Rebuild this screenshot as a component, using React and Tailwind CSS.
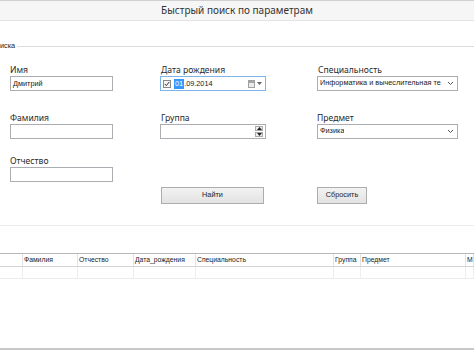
import React from 'react';

const ui = { fontFamily: '"Noto Sans", "Open Sans", sans-serif' };
const small = { fontFamily: '"Liberation Sans", Arial, sans-serif' };

function Label({ children, className = '' }) {
  return (
    <div className={`h-[12px] text-[8.6px] leading-[12px] text-[#2a2a2a] ${className}`} style={ui}>
      {children}
    </div>
  );
}

function TextBox({ value = '', w = 'w-[103px]' }) {
  return (
    <div
      className={`${w} h-[15px] border border-[#abadb3] bg-white px-[2px] text-[7.3px] leading-[13px] text-[#1a1a1a]`}
      style={small}
    >
      {value}
    </div>
  );
}

function Chevron() {
  return (
    <svg width="7" height="5" viewBox="0 0 7 5" className="shrink-0">
      <path d="M1 1l2.5 2.5L6 1" fill="none" stroke="#555" strokeWidth="1" />
    </svg>
  );
}

function ComboBox({ value }) {
  return (
    <div
      className="flex h-[15px] w-[141px] items-center justify-between border border-[#abadb3] bg-white pl-[2px] pr-[3px] text-[7.3px] text-[#1a1a1a]"
      style={small}
    >
      <span className="overflow-hidden whitespace-nowrap">{value}</span>
      <Chevron />
    </div>
  );
}

function DatePicker() {
  return (
    <div
      className="flex h-[15px] w-[106px] items-center border border-[#7eb4ea] bg-white pl-[2px] pr-[3px] text-[7.3px] text-[#1a1a1a]"
      style={small}
    >
      <div className="flex h-[8px] w-[8px] items-center justify-center border border-[#8a8a8a] bg-[#f4f4f4]">
        <svg width="6" height="6" viewBox="0 0 6 6">
          <path d="M0.8 3l1.5 1.6L5.2 1" fill="none" stroke="#333" strokeWidth="1" />
        </svg>
      </div>
      <span className="ml-[3px] bg-[#3399ff] px-[1px] leading-[10px] text-white">01</span>
      <span className="leading-[10px]">.09.2014</span>
      <div className="ml-auto flex items-center gap-[2px]">
        <div className="h-[8px] w-[7px] border border-[#a0a0a0] bg-[#ebebeb]">
          <div className="h-[2px] bg-[#a5a5a5]" />
        </div>
        <svg width="5" height="3" viewBox="0 0 5 3">
          <path d="M0 0h5L2.5 3z" fill="#666" />
        </svg>
      </div>
    </div>
  );
}

function NumericBox() {
  return (
    <div className="flex h-[15px] w-[106px] items-center justify-end border border-[#abadb3] bg-white pr-[2px]">
      <div className="flex flex-col gap-[1px]">
        <div className="flex h-[5px] w-[8px] items-center justify-center border border-[#aaa] bg-[#eee]">
          <svg width="5" height="3" viewBox="0 0 5 3">
            <path d="M0 3h5L2.5 0z" fill="#222" />
          </svg>
        </div>
        <div className="flex h-[5px] w-[8px] items-center justify-center border border-[#aaa] bg-[#eee]">
          <svg width="5" height="3" viewBox="0 0 5 3">
            <path d="M0 0h5L2.5 3z" fill="#222" />
          </svg>
        </div>
      </div>
    </div>
  );
}

function Button({ children, w }) {
  return (
    <div
      className={`${w} flex h-[17px] items-center justify-center border border-[#adadad] bg-gradient-to-b from-[#f2f2f2] to-[#e3e3e3] text-[7.3px] text-[#222]`}
      style={small}
    >
      {children}
    </div>
  );
}

const columns = [
  { name: '', w: 'w-[23px]' },
  { name: 'Фамилия', w: 'w-[55px]' },
  { name: 'Отчество', w: 'w-[56px]' },
  { name: 'Дата_рождения', w: 'w-[62px]' },
  { name: 'Специальность', w: 'w-[138px]' },
  { name: 'Группа', w: 'w-[27px]' },
  { name: 'Предмет', w: 'w-[105px]' },
  { name: 'М', w: 'flex-1' },
];

export default function App() {
  return (
    <div className="h-[354px] w-[474px] overflow-hidden bg-white">
      <div
        className="flex h-[21px] items-center justify-center border-t border-b border-t-[#d0d0d0] border-b-[#e2e2e2] bg-[#f6f6f6] text-[10px] text-[#333]"
        style={ui}
      >
        Быстрый поиск по параметрам
      </div>

      <div className="mt-[21px] flex items-center">
        <span className="text-[7.3px] leading-[8px] text-[#222]" style={small}>иска</span>
        <div className="ml-[2px] flex-1 border-t border-[#dcdcdc]" />
      </div>

      <div className="mt-[14px] flex pl-[10px]">
        <div className="flex w-[150px] flex-col">
          <Label>Имя</Label>
          <TextBox value="Дмитрий" />
          <Label className="mt-[21px]">Фамилия</Label>
          <TextBox />
          <Label className="mt-[16px]">Отчество</Label>
          <TextBox />
        </div>
        <div className="flex w-[157px] flex-col">
          <Label className="pl-[1px]">Дата рождения</Label>
          <DatePicker />
          <Label className="mt-[21px] pl-[1px]">Группа</Label>
          <NumericBox />
          <div className="mt-[48px] pl-[1px]">
            <Button w="w-[103px]">Найти</Button>
          </div>
        </div>
        <div className="flex flex-col">
          <Label className="pl-[1px]">Специальность</Label>
          <ComboBox value="Информатика и вычеслительная те" />
          <Label className="mt-[21px]">Предмет</Label>
          <ComboBox value="Физика" />
          <div className="mt-[48px]">
            <Button w="w-[50px]">Сбросить</Button>
          </div>
        </div>
      </div>

      <div className="mt-[21px] border-t border-[#ececec]" />

      <div className="mt-[27px] border-t border-[#b8b8b8]">
        <div className="flex h-[13px] border-b border-[#d4d4d4]">
          {columns.map((c, i) => (
            <div
              key={i}
              className={`${c.w} overflow-hidden whitespace-nowrap border-r border-[#e2e2e2] pl-[1px] text-[6.8px] leading-[12px] text-[#222]`}
              style={small}
            >
              {c.name}
            </div>
          ))}
        </div>
        <div className="flex h-[12px] border-b border-[#ececec]">
          {columns.map((c, i) => (
            <div key={i} className={`${c.w} border-r border-[#efefef]`} />
          ))}
        </div>
      </div>

      <div className="mt-[69px] h-[2px] bg-[#c8c8c8]" />
    </div>
  );
}
